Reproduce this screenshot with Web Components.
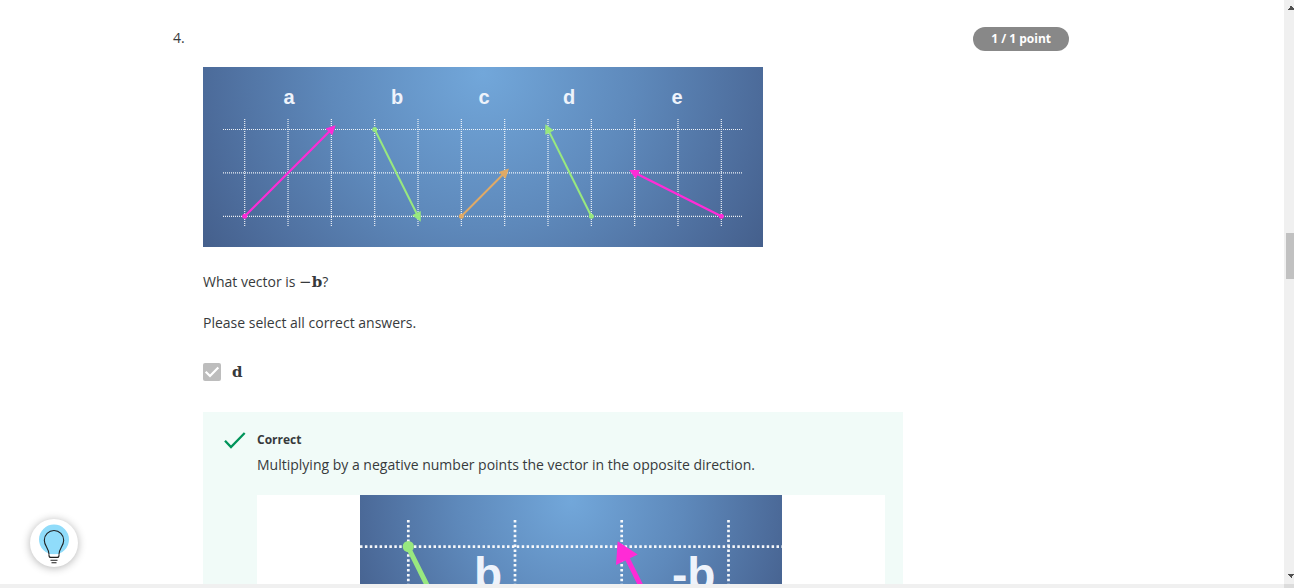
<!DOCTYPE html>
<html lang="en">
<head>
<meta charset="utf-8">
<title>Quiz</title>
<style>
html,body{margin:0;height:100%}
body{background:#fff;color:#373a3c;font:14px/20px "Open Sans","Noto Sans",sans-serif}
p{margin:21px 0 0}
p.prompt{margin-top:25px}
</style>
</head>
<body>
<quiz-window>
  <quiz-question number="4." score="1 / 1 point">
    <vector-chart slot="body"></vector-chart>
    <p slot="body" class="prompt">What vector is <math-minus>−</math-minus><math-bold>b</math-bold>?</p>
    <p slot="body">Please select all correct answers.</p>
    <answer-option slot="body" label="d"></answer-option>
    <answer-feedback slot="body" heading="Correct">
      Multiplying by a negative number points the vector in the opposite direction.
      <negation-chart slot="figure"></negation-chart>
    </answer-feedback>
  </quiz-question>
  <hint-button slot="overlay"></hint-button>
</quiz-window>
<script>
function define(name, markup, setup) {
  const template = document.createElement('template');
  template.innerHTML = markup.trim();
  customElements.define(name, class extends HTMLElement {
    constructor() {
      super();
      this.attachShadow({ mode: 'open' }).append(template.content.cloneNode(true));
    }
    connectedCallback() { if (setup) setup(this, this.shadowRoot); }
  });
}

define('scroll-rail', `
<style>
:host{display:flex;flex-direction:column;background:#f0f0f0;box-sizing:border-box;padding:6px 0 6px 2px}
.thumb{height:46px;background:#c1c1c1}
.before{flex:222}
.after{flex:294}
svg{display:block;width:8px;height:4px;fill:#505050;shape-rendering:crispEdges}
</style>
<svg viewBox="0 0 8 4" aria-hidden="true"><path d="M4 0h2v1h1v1h1v2H2V3h1V2h1V1h0z"/></svg>
<div class="before"></div><div class="thumb"></div><div class="after"></div>
<svg viewBox="0 0 8 4" aria-hidden="true"><path d="M2 0h6v1H7v1H6v2H5V3H4V2H3V1H2z"/></svg>`);

define('quiz-window', `
<style>
:host{display:grid;grid-template:minmax(0,1fr) 4px / minmax(0,1fr) 10px;height:100vh;position:relative;overflow:hidden}
main{overflow:hidden;min-height:0}
.strip{background:#f0f0f0}
.corner{background:#dcdcdc}
</style>
<main><slot></slot></main><scroll-rail></scroll-rail>
<div class="strip"></div><div class="corner"></div>
<slot name="overlay"></slot>`);

define('math-bold', `
<style>:host{display:inline;font:bold 15px/18px "DejaVu Serif",serif}</style><slot></slot>`);

define('math-minus', `
<style>:host{display:inline;font:15px/18px "DejaVu Serif",serif}</style><slot></slot>`);

define('quiz-question', `
<style>
:host{display:block;max-width:896px;padding-top:27px;margin:0 24px 0 173px}
header{display:flex;justify-content:space-between;align-items:flex-start;height:24px}
.number{line-height:22px}
.score{background:#888;color:#fff;border-radius:12px;padding:0 18px;font-weight:700;font-size:12px;line-height:24px}
.body{padding:16px 0 0 30px}
</style>
<header><span class="number"></span><span class="score"></span></header>
<div class="body"><slot name="body"></slot></div>`, (el, root) => {
  root.querySelector('.number').textContent = el.getAttribute('number');
  root.querySelector('.score').textContent = el.getAttribute('score');
});

define('answer-option', `
<style>
:host{display:flex;align-items:center;margin-top:28px;height:22px}
.box{display:grid;width:18px;height:18px;margin-right:11px}
.box>*{grid-area:1/1}
input{appearance:none;margin:0;width:18px;height:18px;background:#bdbdbd;border-radius:2px}
svg{width:18px;height:18px;fill:none;stroke:#fff;stroke-width:2.2;pointer-events:none}
</style>
<span class="box"><input type="checkbox" id="choice" checked disabled><svg viewBox="0 0 18 18" aria-hidden="true"><path d="M2.7 8.7 7 13 15.3 4.4"/></svg></span>
<label for="choice"><math-bold></math-bold></label>`, (el, root) => {
  root.querySelector('math-bold').textContent = el.getAttribute('label');
});

define('answer-feedback', `
<style>
:host{display:grid;grid-template-columns:22px minmax(0,1fr);column-gap:11px;box-sizing:border-box;max-width:700px;margin-top:29px;padding:18px 18px 24px 21px;background:#f1fbf8}
.mark{width:22px;height:22px;fill:none;stroke:#00945a;stroke-width:2.3;display:block}
h3{margin:0;font-size:12px;line-height:20px;font-weight:700}
p{margin:5px 0 0}
.figure{margin-top:20px}
</style>
<svg class="mark" viewBox="0 0 22 22" aria-hidden="true"><path d="M1 10.8 7 17 20.7 3"/></svg>
<div><h3></h3><p><slot></slot></p><div class="figure"><slot name="figure"></slot></div></div>`, (el, root) => {
  root.querySelector('h3').textContent = el.getAttribute('heading');
});

define('vector-chart', `
<style>
:host{display:block;max-width:560px}
svg{display:block;width:100%;height:auto}
text{font:bold 20px "Liberation Sans",Arial,sans-serif;fill:#eef3fb;text-anchor:middle}
.grid{stroke:#fff;stroke-width:1.2;stroke-dasharray:1 1;opacity:.9}
</style>
<svg viewBox="0 0 560 180" role="img" aria-label="Vectors a to e on a grid">
<defs><radialGradient id="sky" gradientUnits="userSpaceOnUse" cx="280" cy="6" r="340"><stop offset="0" stop-color="#72a7da"/><stop offset=".45" stop-color="#5e89bb"/><stop offset=".82" stop-color="#4c6b9a"/><stop offset="1" stop-color="#435d89"/></radialGradient></defs>
<rect width="560" height="180" fill="url(#sky)"/>
<g class="lines"></g>
<text x="86" y="37">a</text><text x="194" y="37">b</text><text x="281" y="37">c</text><text x="366" y="37">d</text><text x="474" y="37">e</text>
<g class="vectors"></g>
</svg>`, (el, root) => {
  const step = 43.33, left = 41.7, rows = [62.5, 105.8, 149.3];
  let d = '';
  for (let i = 0; i < 12; i++) d += `M${left + i * step} 52V160`;
  rows.forEach(y => d += `M20 ${y}H539`);
  root.querySelector('.lines').innerHTML = `<path class="grid" d="${d}"/>`;
  const vectors = [
    [0, 2, 2, 0, '#ff2bd6', 2.2], [3, 0, 4, 2, '#98e87f', 2], [5, 2, 6, 1, '#e0aa66', 2],
    [8, 2, 7, 0, '#98e87f', 2], [11, 2, 9, 1, '#ff2bd6', 2.4]
  ];
  root.querySelector('.vectors').innerHTML = vectors.map(([a, b, c, e, colour, w]) => {
    const x1 = left + a * step, y1 = rows[b], x2 = left + c * step, y2 = rows[e];
    const angle = Math.atan2(y2 - y1, x2 - x1) * 180 / Math.PI;
    return `<g stroke="none" fill="${colour}"><path d="M${x1} ${y1}L${x2} ${y2}" stroke="${colour}" stroke-width="${w}"/>
      <circle cx="${x1}" cy="${y1}" r="2.5"/><path transform="translate(${x2} ${y2}) rotate(${angle})" d="M6 0L-3.5 -4.8V4.8z"/></g>`;
  }).join('');
});

define('negation-chart', `
<style>
:host{display:block;background:#fff}
svg{display:block;width:100%;height:auto}
text{font:bold 46px "Liberation Sans",Arial,sans-serif;fill:#eef3fb}
.grid{stroke:#fff;stroke-width:2.7;stroke-dasharray:2.5 2.4;opacity:.95}
</style>
<svg viewBox="0 0 628 300" role="img" aria-label="Vector b and its negative">
<defs><radialGradient id="sky" gradientUnits="userSpaceOnUse" cx="314" cy="6" r="250"><stop offset="0" stop-color="#72a7da"/><stop offset=".45" stop-color="#5e89bb"/><stop offset=".82" stop-color="#4c6b9a"/><stop offset="1" stop-color="#435d89"/></radialGradient></defs>
<rect x="103" width="422" height="300" fill="url(#sky)"/>
<path class="grid" d="M103 51.7H525M151.3 25V290M258 25V290M364.7 25V290M471.5 25V290"/>
<text x="217" y="95">b</text><text x="415" y="95">-b</text>
<path d="M151 52 256 262" stroke="#98e87f" stroke-width="5"/><circle cx="151.3" cy="51.5" r="5.6" fill="#98e87f"/>
<path d="M369 61 471.5 266" stroke="#ff2bd6" stroke-width="5"/><path d="M360.7 46.3 380.7 59.5 359 70z" fill="#ff2bd6"/>
</svg>`);

define('hint-button', `
<style>
:host{position:absolute;left:30px;bottom:21px}
button{display:block;width:48px;height:48px;padding:0;border:0;border-radius:50%;background:#fff;box-shadow:0 1px 8px rgba(0,0,0,.3);cursor:pointer}
svg{display:block;width:48px;height:48px}
</style>
<button type="button" aria-label="Hint"><svg viewBox="0 0 48 48" fill="none" stroke="#1f1f1f" stroke-width="1.1" aria-hidden="true">
<circle cx="24" cy="20.5" r="15" fill="#90dcfa" stroke="none"/>
<path d="M19 35.2C19 29.5 14.3 27 14.3 21.2A9.7 9.7 0 0 1 33.7 21.2C33.7 27 29 29.5 29 35.2" fill="#90dcfa"/>
<path d="M19 35.2h10v1.2q0 2-2 2h-6q-2 0-2-2z" fill="#fff" stroke="none"/><path d="M19 35.2v1.2q0 2 2 2h6q2 0 2-2v-1.2M20.5 41.3h7M21.5 43.7h5"/></svg></button>`);
</script>
</body>
</html>
